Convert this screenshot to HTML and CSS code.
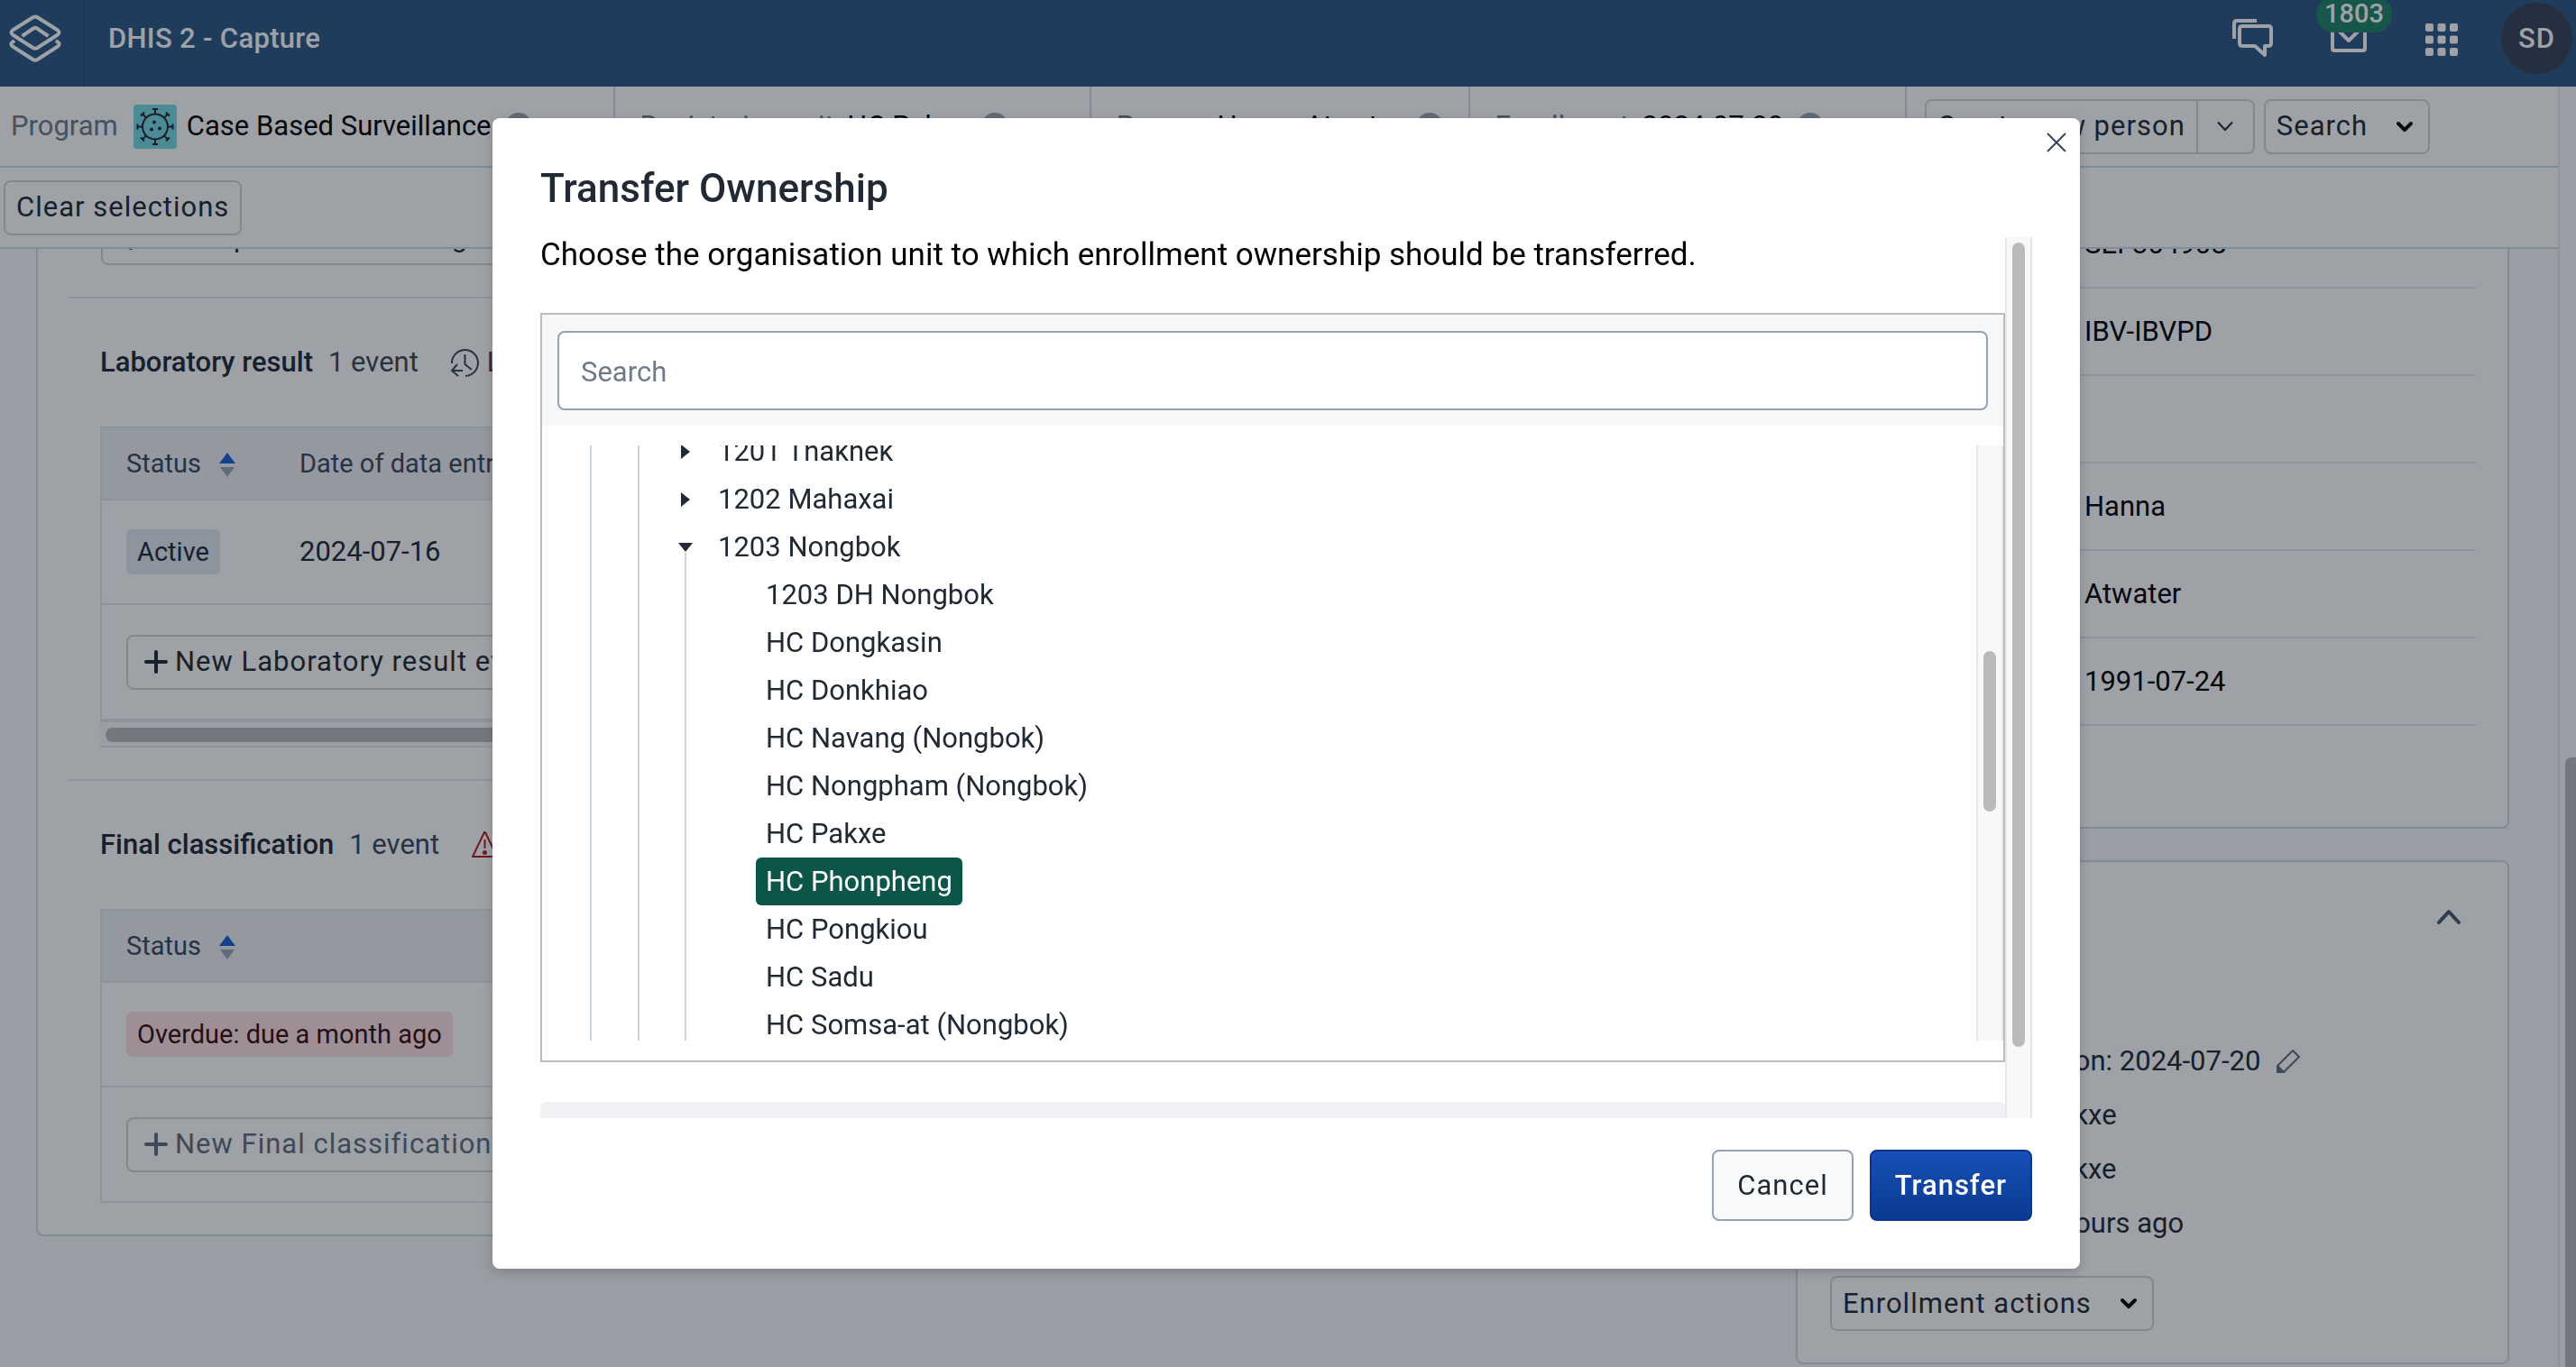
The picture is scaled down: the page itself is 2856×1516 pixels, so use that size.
FILE: index.html
```html
<!DOCTYPE html>
<html lang="en">
<head>
<meta charset="utf-8">
<title>DHIS 2 - Capture</title>
<link rel="stylesheet" href="styles.css">
</head>
<body>
<header class="topbar">
  <a class="logo" href="#" aria-label="Home">
    <svg width="58" height="54" viewBox="0 0 58 54" fill="none" stroke="#fff" stroke-width="4" stroke-linejoin="round">
      <path d="M26.500 3.200Q29 1.800 31.500 3.200L54 17.500Q57 20 54 22.500L31.500 37Q29 38.500 26.500 37L4 22.500Q1 20 4 17.500Z"/>
      <path d="M14.500 24L27 15.500Q29 14.200 31 15.500L43.500 24"/>
      <path d="M6 29L3.500 31Q1 33 4 35.500L26.500 50Q29 51.500 31.500 50L54 35.500Q57 33 54.500 31L52 29"/>
    </svg>
  </a>
  <span class="app-title">DHIS 2 - Capture</span>
  <nav class="top-actions">
    <a class="top-icon" href="#" aria-label="Interpretations">
      <svg width="46" height="46" viewBox="0 0 46 46" fill="none" stroke="#fff" stroke-width="4" stroke-linejoin="round">
        <path d="M2 23V6Q2 3 5 3H27"/>
        <path d="M11 9H40Q43 9 43 12V28Q43 31 40 31H36V41L25 31H11Q8 31 8 28V12Q8 9 11 9Z"/>
      </svg>
    </a>
    <a class="top-icon mail" href="#" aria-label="Messages">
      <svg width="42" height="40" viewBox="0 0 42 40" fill="none" stroke="#fff" stroke-width="4" stroke-linejoin="round">
        <rect x="3" y="5" width="36" height="31" rx="2"/><path d="M5 9L21 25L37 9"/>
      </svg>
      <span class="badge">1803</span>
    </a>
    <a class="top-icon" href="#" aria-label="Apps">
      <svg width="36" height="36" viewBox="0 0 36 36" fill="#fff">
        <rect width="9" height="9" rx="2"/><rect x="13.500" width="9" height="9" rx="2"/><rect x="27" width="9" height="9" rx="2"/>
        <rect y="13.500" width="9" height="9" rx="2"/><rect x="13.500" y="13.500" width="9" height="9" rx="2"/><rect x="27" y="13.500" width="9" height="9" rx="2"/>
        <rect y="27" width="9" height="9" rx="2"/><rect x="13.500" y="27" width="9" height="9" rx="2"/><rect x="27" y="27" width="9" height="9" rx="2"/>
      </svg>
    </a>
    <button class="avatar" type="button">SD</button>
  </nav>
</header>

<div class="page">
  <div class="content">
    <div class="context">
      <div class="context-row">
        <div class="selector selector-first">
          <span class="label">Program</span>
          <svg class="program-icon" width="48" height="49" viewBox="0 0 48 49" fill="none" stroke="#21242b" stroke-width="2">
            <rect width="48" height="49" rx="4" fill="#76dae3" stroke="none"/>
            <circle cx="24" cy="24.500" r="14"/>
            <path d="M24 10.500V5M21 5H27M24 38.500V44M21 44H27M10 24.500H4.500M4.500 21.500V27.500M38 24.500H43.500M43.500 21.500V27.500M14 14.500L10 10.500M8 12.500L12 8.500M34 14.500L38 10.500M36 8.500L40 12.500M14 34.500L10 38.500M8 36.500L12 40.500M34 34.500L38 38.500M36 40.500L40 36.500"/>
            <g fill="#21242b" stroke="none"><circle cx="23" cy="19.500" r="2"/><circle cx="20" cy="27.500" r="2"/><circle cx="29" cy="26.500" r="2"/></g>
          </svg>
          <span>Case Based Surveillance</span>
          <button class="clear" type="button" aria-label="Clear program"></button>
        </div>
        <div class="selector">
          <span class="label">Registering unit:</span><span>HC Pakxe</span>
          <button class="clear" type="button" aria-label="Clear unit"></button>
        </div>
        <div class="selector selector-tight">
          <span class="label">Person:</span><span>Hanna Atwater</span>
          <button class="clear" type="button" aria-label="Clear person"></button>
        </div>
        <div class="selector">
          <span class="label">Enrollment:</span><span>2024-07-20</span>
          <button class="clear" type="button" aria-label="Clear enrollment"></button>
        </div>
        <div class="context-actions">
          <div class="split">
            <button class="btn" type="button">Create new person</button>
            <button class="btn split-toggle" type="button" aria-label="More options">
              <svg width="20" height="12" viewBox="0 0 20 12" fill="none" stroke="#212934" stroke-width="2"><path d="M2 1.500L10 10L18 1.500"/></svg>
            </button>
          </div>
          <button class="btn menu-btn" type="button">Search
            <svg width="20" height="13" viewBox="0 0 20 13" fill="none" stroke="#000" stroke-width="4" stroke-linecap="round" stroke-linejoin="round"><path d="M3 3L10 10L17 3"/></svg>
          </button>
        </div>
      </div>
      <div class="context-row second">
        <button class="btn" type="button">Clear selections</button>
      </div>
    </div>

    <main class="columns">
      <div class="card stages">
        <button class="btn new-btn lead-btn" type="button">
          <svg width="26" height="26" viewBox="0 0 26 26" stroke="currentColor" stroke-width="4" stroke-linecap="round"><path d="M13 2V24M2 13H24"/></svg>
          New Specimen handling event
        </button>
        <section class="stage">
          <div class="stage-head">
            <h2>Laboratory result</h2>
            <span>1 event</span>
            <span class="stage-note">
              <svg width="33" height="33" viewBox="0 0 33 33" fill="none" stroke="#3b4758" stroke-width="2"><path d="M2 17A14.500 14.500 0 1 1 17 31M16.500 7V18L24 24M8 18L2 25L9 31M2 25H14"/></svg>
              Last updated 2 hours ago
            </span>
          </div>
          <div class="table-scroll">
            <table>
              <thead><tr><th class="col-status">Status
                <svg width="20" height="28" viewBox="0 0 20 28"><path d="M1 12L10 0L19 12Z" fill="#1a62d0"/><path d="M2 16H18L10 27Z" fill="#97a6b4"/></svg></th>
                <th>Date of data entry</th></tr></thead>
              <tbody><tr><td><span class="tag">Active</span></td><td>2024-07-16</td></tr></tbody>
              <tfoot><tr><td colspan="2"><button class="btn new-btn" type="button">
                <svg width="26" height="26" viewBox="0 0 26 26" stroke="currentColor" stroke-width="4" stroke-linecap="round"><path d="M13 2V24M2 13H24"/></svg>
                New Laboratory result event</button></td></tr></tfoot>
            </table>
            <div class="hbar"><div class="hbar-thumb"></div></div>
          </div>
        </section>
        <section class="stage">
          <div class="stage-head">
            <h2>Final classification</h2>
            <span>1 event</span>
            <span class="stage-note overdue">
              <svg width="32" height="32" viewBox="0 0 32 32" fill="none" stroke="#b71c1c" stroke-width="2" stroke-linejoin="round"><path d="M15 2H16L29 29H2Z"/><path d="M15.500 10V20"/><circle cx="15.500" cy="24.500" r="1.500" fill="#b71c1c"/></svg>
              1 overdue
            </span>
          </div>
          <table>
            <thead><tr><th>Status
              <svg width="20" height="28" viewBox="0 0 20 28"><path d="M1 12L10 0L19 12Z" fill="#1a62d0"/><path d="M2 16H18L10 27Z" fill="#97a6b4"/></svg></th></tr></thead>
            <tbody><tr><td><span class="tag tag-late">Overdue: due a month ago</span></td></tr></tbody>
            <tfoot><tr><td><button class="btn new-btn btn-muted" type="button">
              <svg width="26" height="26" viewBox="0 0 26 26" stroke="currentColor" stroke-width="4" stroke-linecap="round"><path d="M13 2V24M2 13H24"/></svg>
              New Final classification event</button></td></tr></tfoot>
          </table>
        </section>
      </div>

      <div class="side">
        <div class="card profile">
          <dl>
            <div><dt>Case ID</dt><dd>SEI-304908</dd></div>
            <div><dt>Program area</dt><dd>IBV-IBVPD</dd></div>
            <div><dt>National ID</dt><dd></dd></div>
            <div><dt>First name</dt><dd>Hanna</dd></div>
            <div><dt>Family name</dt><dd>Atwater</dd></div>
            <div><dt>Date of birth</dt><dd>1991-07-24</dd></div>
          </dl>
        </div>
        <div class="card enrollment">
          <button class="collapse" type="button" aria-label="Collapse">
            <svg width="28" height="18" viewBox="0 0 28 18" fill="none" stroke="#4a5768" stroke-width="4" stroke-linecap="round" stroke-linejoin="round"><path d="M3 15L14 3L25 15"/></svg>
          </button>
          <ul class="facts">
            <li>Date of registration: 2024-07-20
              <button class="edit" type="button" aria-label="Edit date">
                <svg width="28" height="28" viewBox="0 0 28 28" fill="none" stroke="#5f6d80" stroke-width="2" stroke-linejoin="round"><path d="M19 2L26 9L9 26H2V19Z"/><path d="M2 19L9 26H2Z" fill="#5f6d80"/></svg>
              </button></li>
            <li>Started at HC Pakxe</li>
            <li>Owned by HC Pakxe</li>
            <li>Last updated 2 hours ago</li>
          </ul>
          <button class="btn menu-btn" type="button">Enrollment actions
            <svg width="20" height="13" viewBox="0 0 20 13" fill="none" stroke="#000" stroke-width="4" stroke-linecap="round" stroke-linejoin="round"><path d="M3 3L10 10L17 3"/></svg>
          </button>
        </div>
      </div>
    </main>
  </div>
  <div class="page-bar"><div class="page-thumb"></div></div>
</div>

<div class="overlay">
  <div class="modal" role="dialog" aria-labelledby="modal-title">
    <button class="close" type="button" aria-label="Close">
      <svg width="22" height="22" viewBox="0 0 22 22" fill="none" stroke="#3b4758" stroke-width="2"><path d="M1 1L21 21M21 1L1 21"/></svg>
    </button>
    <h1 id="modal-title">Transfer Ownership</h1>
    <div class="modal-body">
      <div class="modal-content">
        <p>Choose the organisation unit to which enrollment ownership should be transferred.</p>
        <div class="org">
          <div class="org-search"><input type="text" placeholder="Search" aria-label="Search"></div>
          <div class="org-view">
            <ul class="branch outer"><li>
              <ul class="branch">
                <li><div class="node"><button class="toggle" type="button" aria-label="Expand"><svg width="10" height="16" viewBox="0 0 10 16"><path d="M0 0L10 8L0 16Z" fill="#212934"/></svg></button><span class="unit">1201 Thakhek</span></div></li>
                <li><div class="node"><button class="toggle" type="button" aria-label="Expand"><svg width="10" height="16" viewBox="0 0 10 16"><path d="M0 0L10 8L0 16Z" fill="#212934"/></svg></button><span class="unit">1202 Mahaxai</span></div></li>
                <li><div class="node"><button class="toggle" type="button" aria-label="Collapse"><svg width="16" height="10" viewBox="0 0 16 10"><path d="M0 0H16L8 10Z" fill="#212934"/></svg></button><span class="unit">1203 Nongbok</span></div>
                  <ul class="branch leaves">
                    <li><span class="unit">1203 DH Nongbok</span></li>
                    <li><span class="unit">HC Dongkasin</span></li>
                    <li><span class="unit">HC Donkhiao</span></li>
                    <li><span class="unit">HC Navang (Nongbok)</span></li>
                    <li><span class="unit">HC Nongpham (Nongbok)</span></li>
                    <li><span class="unit">HC Pakxe</span></li>
                    <li><span class="unit selected">HC Phonpheng</span></li>
                    <li><span class="unit">HC Pongkiou</span></li>
                    <li><span class="unit">HC Sadu</span></li>
                    <li><span class="unit">HC Somsa-at (Nongbok)</span></li>
                  </ul>
                </li>
              </ul>
            </li></ul>
            <div class="vbar org-bar"><div class="vbar-thumb"></div></div>
          </div>
        </div>
        <div class="notice"></div>
      </div>
      <div class="vbar"><div class="vbar-thumb"></div></div>
    </div>
    <div class="modal-actions">
      <button class="action" type="button">Cancel</button>
      <button class="action primary" type="button">Transfer</button>
    </div>
  </div>
</div>
</body>
</html>
```
FILE: styles.css
```css
* { box-sizing: border-box; }

body {
  margin: 0;
  height: 100vh;
  display: flex;
  flex-direction: column;
  overflow: hidden;
  background: #f8f9fa;
  color: #212934;
  font-family: Roboto, "Liberation Sans", sans-serif;
  font-size: 31px;
  line-height: 36px;
}

a { color: inherit; text-decoration: none; }
button, input { font: inherit; color: inherit; }
button { margin: 0; padding: 0; border: 0; background: none; }
ul, dl, dd, h1, h2, p { margin: 0; padding: 0; }
ul { list-style: none; }
svg { display: block; flex: none; }

/* Header bar */
.topbar {
  height: 96px;
  flex: none;
  display: flex;
  overflow: hidden;
  background: #2c5884;
  color: #fff;
}
.logo {
  width: 94px;
  padding: 16px 0 0 10px;
  border-right: 2px solid #285078;
}
.app-title { padding: 25px 0 0 26px; font-weight: 500; letter-spacing: 0.01em; }
.top-actions { margin-left: auto; padding: 3px 4px 0 0; display: flex; }
.top-icon { padding-top: 17px; margin-right: 62px; }
.top-icon:nth-child(3) { padding-top: 23px; margin-right: 48px; }
.top-icon.mail { position: relative; margin-right: 64px; }
.badge {
  position: absolute;
  left: -15px;
  top: -7px;
  padding: 1px 9px 3px;
  border-radius: 20px;
  background: #1f8268;
  font-size: 29px;
  font-weight: 500;
}
.avatar {
  width: 79px;
  height: 79px;
  border-radius: 50%;
  background: #374155;
  font-weight: 500;
  letter-spacing: 1px;
}

/* Scrolled page with its scrollbar */
.page { flex: 1; min-height: 0; display: flex; }
.content { flex: 1; min-width: 0; }
.page-bar { width: 20px; border-left: 2px solid #e6e8ea; padding: 744px 0 0 6px; }
.page-thumb { height: 100%; border-radius: 7px 0 0 0; background: #b9bbbd; }

/* Context selector */
.context { position: relative; z-index: 1; background: #fff; }
.context-row {
  height: 90px;
  display: flex;
  align-items: center;
  border-bottom: 2px solid #cddae8;
}
.second { padding-left: 4px; }
.selector {
  align-self: stretch;
  display: flex;
  align-items: center;
  gap: 7px;
  padding: 0 90px 0 28px;
  border-right: 2px solid #cddae8;
  color: #000;
}
.selector-first { padding-left: 12px; }
.selector-first .label { margin-right: 10px; }
.program-icon { margin-right: 4px; }
.selector-tight { padding-right: 28px; }
.label { color: #6e7a8a; }
.clear { width: 30px; height: 30px; border-radius: 50%; margin-left: 8px; background: #97a6b4; }
.context-actions { display: flex; gap: 10px; padding-left: 20px; }

/* Buttons */
.btn {
  height: 61px;
  padding: 0 12px;
  border: 2px solid #d4d4d4;
  border-radius: 8px;
  letter-spacing: 1px;
  white-space: nowrap;
}
.split { display: flex; }
.split .btn:first-child { border-radius: 8px 0 0 8px; }
.split .split-toggle { width: 63px; padding: 0 20px; border-left: 0; border-radius: 0 8px 8px 0; }
.menu-btn { display: flex; align-items: center; gap: 31px; padding-right: 16px; }
.new-btn { display: flex; align-items: center; gap: 8px; padding: 0 18px; }
.btn-muted { color: #5f6d80; }

/* Columns */
.columns {
  margin-top: -76px;
  padding: 0 54px 0 40px;
  display: grid;
  grid-template-columns: 1fr 791px;
  gap: 35px;
  align-items: start;
}
.card { border: 2px solid #cddae8; border-radius: 8px; background: #fff; }
.stages { padding: 31px 34px 35px; }
.lead-btn { margin: 0 0 35px 36px; }

.stage { border-top: 2px solid #dfe9ee; padding: 0 35px; margin-bottom: 35px; }
.stage:last-child { margin-bottom: 0; }
.stage-head { height: 142px; display: flex; align-items: center; gap: 17px; color: #3b4758; }
.stage-head h2 { font-size: 31px; line-height: 36px; font-weight: 500; color: #212934; }
.stage-note { display: flex; align-items: center; gap: 8px; margin-left: 18px; white-space: nowrap; }
.overdue { color: #b71c1c; }

table { width: 100%; border: 2px solid #dfe9ee; border-spacing: 0; }
th, td { padding: 0 27px; text-align: left; border-bottom: 2px solid #dfe9ee; }
th { height: 80px; background: #eff1f7; color: #3b4758; font-size: 29px; font-weight: 400; }
th svg { display: inline-block; vertical-align: middle; margin-left: 12px; }
td { height: 116px; }
tfoot td { height: 126px; border-bottom: 0; }
.col-status { width: 192px; padding-right: 0; }
.tag {
  display: inline-block;
  padding: 7px 12px;
  border-radius: 6px;
  background: #e1ebf0;
  font-size: 29px;
}
.tag-late { background: #ffe1e4; color: #330d0d; }
.hbar { height: 30px; padding: 6px; border: solid #e6e8ea; border-width: 2px 0; background: #fafafa; }
.hbar-thumb { width: 80%; height: 16px; border-radius: 8px; background: #b9bbbd; }

/* Right column */
.side { display: grid; gap: 35px; }
.profile { padding: 21px 35px 112px; color: #000; }
.profile dl > div {
  height: 97px;
  display: grid;
  grid-template-columns: 283px 1fr;
  align-items: center;
  border-bottom: 2px solid #dfe9ee;
}
.enrollment { padding: 52px 35px 35px; }
.enrollment .menu-btn { margin-left: 1px; }
.collapse { display: block; margin-left: auto; margin-right: 16px; }
.facts { display: grid; gap: 24px; margin: 133px 0 40px 42px; }
.facts li { display: flex; align-items: center; }
.edit { margin-left: 17px; }

/* Modal */
.overlay {
  position: fixed;
  z-index: 2;
  inset: 0;
  display: flex;
  justify-content: center;
  align-items: flex-start;
  padding: 131px 4px 0 0;
  background: rgba(13, 20, 32, 0.4);
}
.modal {
  position: relative;
  width: 1760px;
  max-width: 100%;
  padding: 52px 53px 53px;
  border-radius: 8px;
  background: #fff;
  box-shadow: 0 4px 12px rgba(13, 20, 32, 0.2);
}
.close { position: absolute; right: 15px; top: 16px; }
h1 { font-size: 44px; line-height: 52px; font-weight: 500; }
.modal-body { display: flex; height: 977px; margin: 28px 0 35px; overflow: hidden; }
.modal-content { flex: 1; min-width: 0; }
.modal-content p { font-size: 35px; line-height: 40px; color: #000; }
.org { margin-top: 44px; border: 2px solid #bdbdbd; }
.org-search { padding: 18px 17px 17px; background: #f5f7f9; }
.org-search input {
  display: block;
  width: 100%;
  height: 88px;
  padding: 2px 24px 0;
  border: 2px solid #94a2b3;
  border-radius: 8px;
  background: #fff;
}
.org-search input::placeholder { color: #6e7a8a; opacity: 1; }
.org-view { display: flex; height: 660px; margin: 22px 0; overflow: hidden; }
.branch { margin-left: 51px; border-left: 2px solid #c9d5e0; }
.outer { flex: 1; align-self: flex-start; margin: -20px 0 0 53px; }
.node { height: 53px; display: flex; padding-left: 26px; }
.toggle { width: 50px; display: flex; justify-content: center; align-items: center; }
.leaves { margin: -20px 0 0 50px; padding-top: 20px; }
.leaves li { display: flex; height: 53px; padding-left: 77px; }
.unit { padding: 0 11px; line-height: 53px; border-radius: 6px; white-space: nowrap; }
.selected { background: #0b5648; color: #fff; }
.vbar { width: 30px; padding: 6px; border: solid #e6e6e6; border-width: 0 2px; background: #f8f8f8; }
.vbar-thumb { height: 892px; border-radius: 8px; background: #bababa; }
.org-bar { padding-top: 228px; }
.org-bar .vbar-thumb { height: 178px; }
.notice { height: 80px; margin-top: 44px; border-radius: 6px; background: #f0f1f5; }
.modal-actions { display: flex; justify-content: flex-end; gap: 18px; }
.action {
  height: 79px;
  padding: 0 26px;
  border: 2px solid #94a2b3;
  border-radius: 8px;
  background: #f8f9fb;
  letter-spacing: 1px;
}
.primary {
  border-color: #0b3490;
  background: linear-gradient(#1650b8, #0a3a90);
  color: #fff;
  font-weight: 500;
}
```
